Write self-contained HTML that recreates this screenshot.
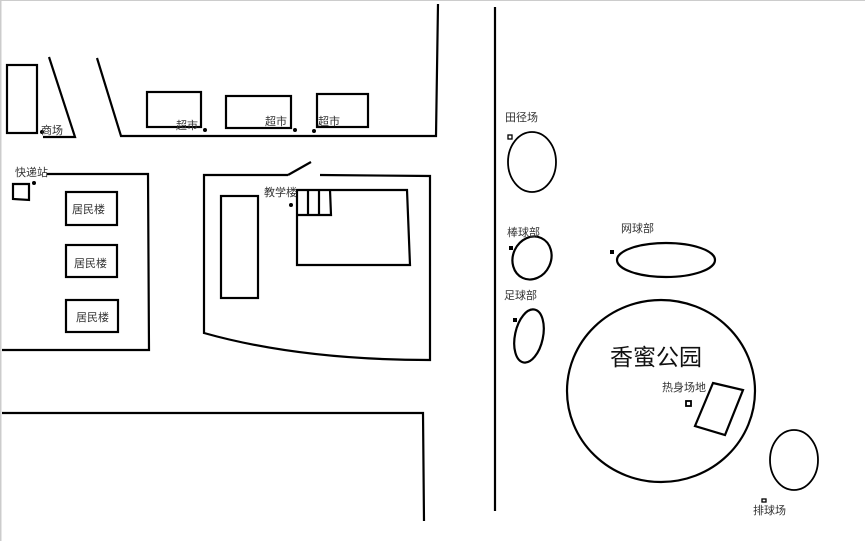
<!DOCTYPE html>
<html><head><meta charset="utf-8"><style>
html,body{margin:0;padding:0;background:#fff;}
svg{display:block}
text{font-family:"Liberation Sans","Noto Sans CJK SC",sans-serif;fill:#333;font-size:11px}
</style></head><body>
<svg width="865" height="541" viewBox="0 0 865 541" xmlns="http://www.w3.org/2000/svg">
<rect x="0" y="0" width="865" height="1" fill="#ccc"/>
<rect x="0" y="0" width="1.5" height="541" fill="#ccc"/>
<g fill="none" stroke="#000" stroke-width="2.2">
<rect x="7" y="65" width="30" height="68"/>
<polyline points="49,57 75,137 43,137"/>
<polyline points="97,58 121,136 436,136 438,4"/>
<rect x="147" y="92" width="54" height="35"/>
<rect x="226" y="96" width="65" height="32"/>
<rect x="317" y="94" width="51" height="33"/>
<polyline points="47,174 148,174 149,350 2,350"/>
<polygon points="13,184 29,184 29,200 13,199"/>
<rect x="66" y="192" width="51" height="33"/>
<rect x="66" y="245" width="51" height="32"/>
<rect x="66" y="300" width="52" height="32"/>
<path d="M288,175 L204,175 L204,333 Q300,360 430,360 L430,176 L320,175"/>
<line x1="288" y1="175" x2="311" y2="162"/>
<rect x="221" y="196" width="37" height="102"/>
<polygon points="297,190 407,190 410,265 297,265"/>
<line x1="308" y1="190" x2="308" y2="215"/>
<line x1="319" y1="190" x2="319" y2="215"/>
<polyline points="330,190 331,215 297,215"/>
<polyline points="2,413 423,413 424,521"/>
<line x1="495" y1="7" x2="495" y2="511"/>
<ellipse cx="532" cy="162" rx="24" ry="30" stroke-width="1.8"/>
<ellipse cx="532" cy="258" rx="19" ry="22" transform="rotate(25 532 258)"/>
<ellipse cx="666" cy="260" rx="49" ry="17"/>
<ellipse cx="529" cy="336" rx="14" ry="27" transform="rotate(12 529 336)"/>
<ellipse cx="661" cy="391" rx="94" ry="91"/>
<polygon points="713,383 743,390 725,435 695,426"/>
<ellipse cx="794" cy="460" rx="24" ry="30" stroke-width="1.8"/>
<rect x="508" y="135" width="4" height="4" stroke-width="1.3"/>
<rect x="686" y="401" width="5" height="5" stroke-width="1.8"/>
<rect x="762" y="499" width="4" height="3" stroke-width="1.3"/>
</g>
<g fill="#000">
<circle cx="42" cy="132" r="2"/><circle cx="205" cy="130" r="2"/><circle cx="295" cy="130" r="2"/><circle cx="314" cy="131" r="2"/>
<circle cx="34" cy="183" r="2"/><circle cx="291" cy="205" r="2"/>
<rect x="509" y="246" width="4" height="4"/><rect x="610" y="250" width="4" height="4"/><rect x="513" y="318" width="4" height="4"/>
</g>
<text x="41" y="134">商场</text>
<text x="176" y="129">超市</text>
<text x="265" y="125">超市</text>
<text x="318" y="125">超市</text>
<text x="15" y="176">快递站</text>
<text x="72" y="213">居民楼</text>
<text x="74" y="267">居民楼</text>
<text x="76" y="321">居民楼</text>
<text x="264" y="196">教学楼</text>
<text x="505" y="121">田径场</text>
<text x="507" y="236">棒球部</text>
<text x="621" y="232">网球部</text>
<text x="504" y="299">足球部</text>
<text x="610" y="365" style="font-size:23px;fill:#111">香蜜公园</text>
<text x="662" y="391">热身场地</text>
<text x="753" y="514">排球场</text>
</svg>
</body></html>
